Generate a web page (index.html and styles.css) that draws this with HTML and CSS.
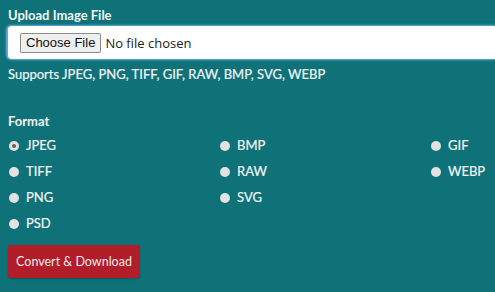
FILE: index.html
```html
<!DOCTYPE html>
<html>
<head>
<meta charset="utf-8">
<link rel="stylesheet" href="styles.css">
</head>
<body>
<form class="form">
  <label class="label">Upload Image File</label>
  <div class="file-box">
    <span class="file-btn">Choose File</span>
    <span class="file-text">No file chosen</span>
  </div>
  <p class="hint">Supports JPEG, PNG, TIFF, GIF, RAW, BMP, SVG, WEBP</p>

  <div class="label format-label">Format</div>
  <div class="options">
    <label class="opt"><span class="radio checked"></span>JPEG</label>
    <label class="opt"><span class="radio"></span>BMP</label>
    <label class="opt"><span class="radio"></span>GIF</label>
    <label class="opt"><span class="radio"></span>TIFF</label>
    <label class="opt"><span class="radio"></span>RAW</label>
    <label class="opt"><span class="radio"></span>WEBP</label>
    <label class="opt"><span class="radio"></span>PNG</label>
    <label class="opt"><span class="radio"></span>SVG</label>
    <span class="opt empty"></span>
    <label class="opt"><span class="radio"></span>PSD</label>
  </div>
  <button type="button" class="btn">Convert &amp; Download</button>
</form>
</body>
</html>
```
FILE: styles.css
```css
html, body {
  margin: 0;
  padding: 0;
  background: #0f7279;
  overflow: hidden;
}
body {
  font-family: Lato, "Open Sans", sans-serif;
  color: #f2f6f6;
  width: 495px;
  height: 292px;
}
.form {
  padding: 7px 0 0 8px;
  display: flex;
  flex-direction: column;
  align-items: flex-start;
}
.label {
  font-size: 13px;
  font-weight: bold;
  line-height: 17px;
}
.file-box {
  margin-top: 2px;
  box-sizing: border-box;
  width: 487px;
  height: 33px;
  background: #fff;
  border-radius: 4px 0 0 4px;
  box-shadow: -1px 0 2px 1px #66afe9;
  display: flex;
  align-items: center;
  padding-left: 12px;
}
.file-btn {
  font-family: "Liberation Sans", Arial, sans-serif;
  font-size: 13px;
  color: #111;
  background: #efefef;
  border: 1px solid #8a8a8a;
  border-radius: 2px;
  padding: 1px 5px;
  line-height: 16px;
}
.file-text {
  font-family: "Open Sans", sans-serif;
  font-size: 13px;
  color: #222;
  margin-left: 4px;
}
.hint {
  margin: 7px 0 0;
  font-size: 13px;
  line-height: 17px;
  -webkit-text-stroke: 0.2px #f2f6f6;
}
.format-label {
  margin-top: 30px;
}
.options {
  margin-top: 7px;
  display: grid;
  grid-template-columns: 211px 211px 57px;
  row-gap: 9px;
}
.opt {
  display: flex;
  align-items: center;
  font-size: 13px;
  line-height: 17px;
  height: 17px;
  -webkit-text-stroke: 0.2px #f2f6f6;
}
.radio {
  flex: none;
  width: 10px;
  height: 10px;
  border-radius: 50%;
  background: #e2e2e2;
  margin-left: 1px;
  margin-right: 7px;
  position: relative;
}
.radio.checked::after {
  content: "";
  position: absolute;
  left: 3px;
  top: 3px;
  width: 4px;
  height: 4px;
  border-radius: 50%;
  background: #6d5a52;
}
.btn {
  margin-top: 13px;
  font-family: Lato, sans-serif;
  font-size: 12.5px;
  color: #f5eaea;
  background: #b11d29;
  border: none;
  border-radius: 3px;
  width: 132px;
  height: 33px;
  padding: 0;
  box-shadow: 0 1px 2px rgba(0,0,0,0.25);
}
```
